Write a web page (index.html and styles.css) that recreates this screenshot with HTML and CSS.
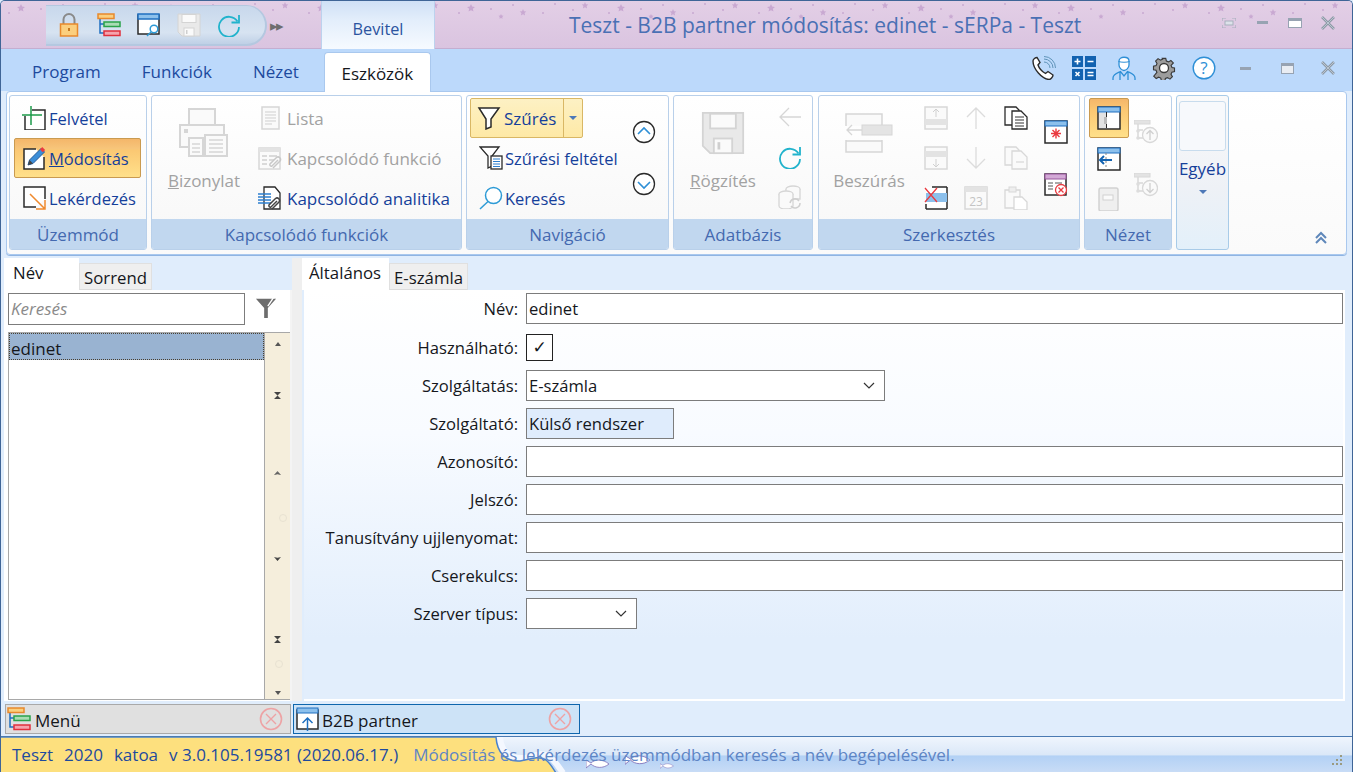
FILE: index.html
```html
<!DOCTYPE html>
<html lang="hu">
<head>
<meta charset="utf-8">
<title>Teszt - B2B partner módosítás: edinet - sERPa - Teszt</title>
<link rel="stylesheet" href="styles.css">
</head>
<body>
<svg class="sprite" width="0" height="0" aria-hidden="true">
  <defs>
    <pattern id="stars" width="150" height="48" patternUnits="userSpaceOnUse">
      <g fill="#c9a9d2">
        <path d="M20 3l1.2 2.6 2.8.3-2.1 1.9.6 2.8-2.5-1.4-2.5 1.4.6-2.8-2.1-1.9 2.8-.3z"/>
        <circle cx="40" cy="8" r="1"/><circle cx="8" cy="12" r="1"/><circle cx="62" cy="4" r="1"/>
        <path d="M72 8l1 2.2 2.4.3-1.8 1.6.5 2.4-2.1-1.2-2.1 1.2.5-2.4-1.8-1.6 2.4-.3z"/>
        <circle cx="92" cy="12" r="1"/><circle cx="104" cy="3" r="1"/><circle cx="122" cy="9" r="1"/>
        <path d="M134 1l1 2.2 2.4.3-1.8 1.6.5 2.4-2.1-1.2-2.1 1.2.5-2.4-1.8-1.6 2.4-.3z"/>
        <path d="M50 13l.8 1.6 1.8.2-1.3 1.2.3 1.8-1.6-.9-1.6.9.3-1.8-1.3-1.2 1.8-.2z"/>
      </g>
    </pattern>
    <symbol id="i-lock" viewBox="0 0 24 24"><path d="M6.500 12V6.500a5.500 5.500 0 0 1 11 0V12" fill="none" stroke="#8a8a8a" stroke-width="2"/><rect x="3.500" y="11" width="17" height="12" fill="#fbcf7e" stroke="#e8892c" stroke-width="1.500"/><rect x="11" y="15" width="2" height="3" fill="#c77a20"/></symbol>
    <symbol id="i-tree" viewBox="0 0 24 24"><path d="M3 4v16h4M3 11h4" fill="none" stroke="#1f6fc0" stroke-width="1.500"/><rect x="1" y="1" width="16" height="4.500" fill="#fbcf7e" stroke="#e8892c" stroke-width="1.500"/><rect x="7" y="9" width="16" height="4.500" fill="#a9dcb4" stroke="#2aa34a" stroke-width="1.500"/><rect x="7" y="18" width="16" height="4.500" fill="#f5a3ad" stroke="#e0303c" stroke-width="1.500"/></symbol>
    <symbol id="i-winsearch" viewBox="0 0 24 24"><rect x="1" y="2" width="21" height="19" fill="#fff" stroke="#2a2a2a" stroke-width="1.500"/><rect x="1" y="1" width="21" height="5" fill="#8cc0ec" stroke="#1f6fc0" stroke-width="1.500"/><circle cx="17" cy="16" r="3.800" fill="#fff" stroke="#2e9bd6" stroke-width="1.500"/><path d="M14 19l-4 4" stroke="#2e9bd6" stroke-width="1.500"/></symbol>
    <symbol id="i-save" viewBox="0 0 24 24"><path d="M1 1h22v22H5l-4-4z" fill="#e9e9e9" stroke="#d4d4d4"/><rect x="5" y="1.500" width="14" height="8" fill="#fafafa" stroke="#d4d4d4"/><rect x="7" y="15" width="10" height="8" fill="#fafafa" stroke="#d4d4d4"/><rect x="9" y="17" width="1.500" height="4" fill="#cfcfcf"/></symbol>
    <symbol id="i-refresh" viewBox="0 0 24 24"><path d="M20.500 8.500A10 10 0 1 0 22 14" fill="none" stroke="#21b3cc" stroke-width="1.800"/><path d="M22 2v7.500h-7.500" fill="none" stroke="#21b3cc" stroke-width="1.800"/></symbol>
    <symbol id="i-add" viewBox="0 0 24 24"><path d="M10 4h13v20H3V10" fill="#fff" stroke="#2a2a2a" stroke-width="1.500"/><path d="M0 9h20M9 0v19" stroke="#1d9a4a" stroke-width="1.500"/></symbol>
    <symbol id="i-edit" viewBox="0 0 24 24"><path d="M14 3H2v20h20V11" fill="#fff" stroke="#2a2a2a" stroke-width="1.500"/><path d="M6 19l1.500-5L19 2.500l3.500 3.500L11 17.500z" fill="#3c8ed8" stroke="#245a9a"/><path d="M18 3.500l2.200-2.500 3 3-2.500 2.200z" fill="#ea3a40"/><path d="M6 19l1.500-5 3.500 3.500z" fill="#444"/></symbol>
    <symbol id="i-query" viewBox="0 0 24 24"><path d="M23 13V1H2v20h12" fill="#fff" stroke="#2a2a2a" stroke-width="1.500"/><path d="M8 8l15 15M23 14v9h-9" fill="none" stroke="#ef8a2e" stroke-width="1.500"/></symbol>
    <symbol id="i-printer" viewBox="0 0 50 50"><g fill="#fafafa" stroke="#d6d6d6" stroke-width="2"><rect x="10" y="1" width="26" height="18"/><rect x="1" y="17" width="44" height="22"/><rect x="10" y="30" width="14" height="18"/><rect x="26" y="27" width="22" height="21"/></g><path d="M5 21h4v4H5z" fill="#d6d6d6"/><path d="M30 32h14M30 36h14M30 40h14M30 44h14M13 36h8M13 40h8M13 44h8" stroke="#d6d6d6" stroke-width="1.500"/></symbol>
    <symbol id="i-doc" viewBox="0 0 24 24"><rect x="4" y="1" width="17" height="22" fill="#fafafa" stroke="#d6d6d6" stroke-width="1.500"/><path d="M7 6h11M7 9h11M7 12h11M7 15h11M7 18h7" stroke="#cfcfcf"/></symbol>
    <symbol id="i-linkd" viewBox="0 0 24 24"><rect x="1" y="2" width="21" height="21" fill="#fafafa" stroke="#d8d8d8" stroke-width="1.500"/><rect x="1" y="2" width="21" height="4" fill="#e3e3e3"/><path d="M4 10h5M4 14h5M4 18h5M11 10h8M11 14h5" stroke="#cfcfcf" stroke-width="1.500"/><path d="M15 22l7-7a2.500 2.500 0 0 0-3.500-3.500L12 18a1.500 1.500 0 0 0 2 2l6-6" fill="none" stroke="#c8c8c8" stroke-width="1.500"/></symbol>
    <symbol id="i-linka" viewBox="0 0 24 24"><path d="M6 1h11l5 6v16H6z" fill="#fff" stroke="#2a2a2a" stroke-width="1.300"/><path d="M0 8h13M0 11h13M0 14h13M0 17h13" stroke="#2c7fd0" stroke-width="1.500"/><path d="M14 23l7-7a2.500 2.500 0 0 0-3.500-3.500L11 19a1.500 1.500 0 0 0 2 2l6-6" fill="none" stroke="#444" stroke-width="1.500"/></symbol>
    <symbol id="i-filter" viewBox="0 0 24 24"><path d="M2 2h20l-8 11v8l-5 2V13z" fill="#fff" stroke="#2a2a2a" stroke-width="1.500"/></symbol>
    <symbol id="i-filterdoc" viewBox="0 0 24 24"><path d="M1 1h19l-7 9v10l-4 2V10z" fill="#fff" stroke="#2a2a2a" stroke-width="1.300"/><rect x="12" y="10" width="11" height="13" fill="#fff" stroke="#2a2a2a" stroke-width="1.300"/><path d="M14 13h7M14 15.500h7M14 18h7M14 20.500h7" stroke="#2c7fd0"/></symbol>
    <symbol id="i-search" viewBox="0 0 24 24"><circle cx="14.500" cy="9.500" r="8" fill="#fff" stroke="#2e9bd6" stroke-width="1.500"/><path d="M9 15.500L1 23" stroke="#2e9bd6" stroke-width="1.500"/></symbol>
    <symbol id="i-up" viewBox="0 0 24 24"><circle cx="12" cy="12" r="10.500" fill="#fff" stroke="#2a2a2a" stroke-width="1.300"/><path d="M6 14l6-6 6 6" fill="none" stroke="#2e8fd6" stroke-width="1.600"/></symbol>
    <symbol id="i-down" viewBox="0 0 24 24"><circle cx="12" cy="12" r="10.500" fill="#fff" stroke="#2a2a2a" stroke-width="1.300"/><path d="M6 10l6 6 6-6" fill="none" stroke="#2e8fd6" stroke-width="1.600"/></symbol>
    <symbol id="i-back" viewBox="0 0 24 24"><path d="M23 12H2M11 3l-9 9 9 9" fill="none" stroke="#d6d6d6" stroke-width="1.300"/></symbol>
    <symbol id="i-db" viewBox="0 0 24 24"><g fill="#fafafa" stroke="#d6d6d6" stroke-width="1.300"><ellipse cx="15" cy="4" rx="7" ry="3"/><path d="M8 4v10h14V4"/><ellipse cx="8" cy="9" rx="7" ry="3"/><path d="M1 9v12a7 3 0 0 0 14 0V9"/></g><path d="M12 18a5 5 0 0 1 9-2M22 18a5 5 0 0 1-9 3" fill="none" stroke="#cfcfcf" stroke-width="1.500"/></symbol>
    <symbol id="i-insert" viewBox="0 0 48 40"><path d="M1 13V1h36v12M1 27v12h36V27M1 28h36" fill="#fafafa" stroke="#d6d6d6" stroke-width="1.500"/><rect x="17" y="12" width="30" height="10" fill="#e4e4e4" stroke="#d6d6d6"/><path d="M17 17H2M7 12l-5 5 5 5" fill="none" stroke="#d6d6d6" stroke-width="1.300"/></symbol>
    <symbol id="i-rowup" viewBox="0 0 24 24"><rect x="1" y="1" width="22" height="22" fill="#fafafa" stroke="#d8d8d8" stroke-width="1.500"/><rect x="1" y="13" width="22" height="6" fill="#e3e3e3"/><path d="M12 11V4M9 6l3-3 3 3" fill="none" stroke="#d0d0d0"/></symbol>
    <symbol id="i-rowdown" viewBox="0 0 24 24"><rect x="1" y="1" width="22" height="22" fill="#fafafa" stroke="#d8d8d8" stroke-width="1.500"/><rect x="1" y="5" width="22" height="6" fill="#e3e3e3"/><path d="M12 13v7M9 18l3 3 3-3" fill="none" stroke="#d0d0d0"/></symbol>
    <symbol id="i-rowdel" viewBox="0 0 24 24"><path d="M2 1h21v22H2z" fill="#fff"/><path d="M8 1h15M2 23h21M23 1v22M2 18v5" fill="none" stroke="#2a2a2a" stroke-width="1.500"/><rect x="2" y="7" width="21" height="9" fill="#8cc0ec"/><path d="M1 2l12 14M13 2L1 16" stroke="#ea3a40" stroke-width="1.300"/></symbol>
    <symbol id="i-aup" viewBox="0 0 24 24"><path d="M12 23V2M3 11l9-9 9 9" fill="none" stroke="#dcdcdc" stroke-width="1.300"/></symbol>
    <symbol id="i-adown" viewBox="0 0 24 24"><path d="M12 1v21M3 13l9 9 9-9" fill="none" stroke="#dcdcdc" stroke-width="1.300"/></symbol>
    <symbol id="i-cal" viewBox="0 0 24 24"><rect x="1" y="1" width="22" height="22" fill="#fafafa" stroke="#d8d8d8" stroke-width="1.500"/><rect x="1" y="1" width="22" height="5" fill="#e3e3e3"/><text x="12" y="20" font-family="Open Sans" font-size="12" text-anchor="middle" fill="#c4c4c4">23</text></symbol>
    <symbol id="i-copy" viewBox="0 0 24 24"><path d="M1 1h11l3 3v15H1z" fill="#fff" stroke="#2a2a2a" stroke-width="1.300"/><path d="M8 5h9l6 6v12H8z" fill="#fff" stroke="#2a2a2a" stroke-width="1.300"/><path d="M11 11h9M11 14h9M11 17h9M11 20h9" stroke="#333"/></symbol>
    <symbol id="i-cut" viewBox="0 0 24 24"><path d="M1 1h11l3 3v15H1z" fill="#fafafa" stroke="#d8d8d8" stroke-width="1.300"/><path d="M8 5h9l6 6v12H8z" fill="#fafafa" stroke="#d8d8d8" stroke-width="1.300"/><path d="M12 16h8" stroke="#d0d0d0"/></symbol>
    <symbol id="i-paste" viewBox="0 0 24 24"><path d="M1 4h15v18H1z" fill="#fafafa" stroke="#d8d8d8" stroke-width="1.300"/><rect x="5" y="1" width="7" height="5" fill="#eee" stroke="#d8d8d8"/><path d="M10 11h8l5 5v8H10z" fill="#fff" stroke="#d8d8d8" stroke-width="1.300"/></symbol>
    <symbol id="i-star" viewBox="0 0 24 24"><rect x="1" y="1" width="22" height="22" fill="#fff" stroke="#2a2a2a" stroke-width="1.500"/><rect x="1" y="1" width="22" height="5" fill="#8cc0ec" stroke="#1f6fc0" stroke-width="1"/><path d="M12 8.500v10M7 13.500h10M8.500 10l7 7M15.500 10l-7 7" stroke="#ea3a40" stroke-width="1.400"/></symbol>
    <symbol id="i-windel" viewBox="0 0 24 24"><rect x="1" y="1" width="21" height="21" fill="#fff" stroke="#2a2a2a" stroke-width="1.500"/><rect x="1" y="1" width="21" height="5" fill="#d3a9d6" stroke="#99569e" stroke-width="1"/><path d="M4 10h5M4 13h5M4 16h5M11 10h7" stroke="#555"/><circle cx="17" cy="17" r="5.500" fill="#fff" stroke="#ea3a40" stroke-width="1.300"/><path d="M14.500 14.500l5 5M19.500 14.500l-5 5" stroke="#ea3a40" stroke-width="1.300"/></symbol>
    <symbol id="i-pane" viewBox="0 0 24 24"><rect x="1" y="1" width="22" height="22" fill="#fff" stroke="#2a2a2a" stroke-width="1.500"/><rect x="1" y="1" width="22" height="5" fill="#8cc0ec" stroke="#1f6fc0" stroke-width="1"/><rect x="2" y="7" width="7" height="15" fill="#e2e2e2"/><path d="M9.500 6v16" stroke="#2a2a2a"/><rect x="7" y="11" width="3" height="7" fill="#bbb"/></symbol>
    <symbol id="i-paneback" viewBox="0 0 24 24"><rect x="1" y="1" width="22" height="22" fill="#fff" stroke="#2a2a2a" stroke-width="1.500"/><rect x="1" y="1" width="22" height="5" fill="#8cc0ec" stroke="#1f6fc0" stroke-width="1"/><path d="M9 6v17" stroke="#888" stroke-dasharray="2 2"/><path d="M15 13H3M7 9l-4 4 4 4" fill="none" stroke="#1262b0" stroke-width="2"/></symbol>
    <symbol id="i-box" viewBox="0 0 24 24"><rect x="2" y="1" width="19" height="23" rx="2" fill="#efefef" stroke="#d2d2d2" stroke-width="1.500"/><rect x="6" y="8" width="10" height="5" fill="#fafafa" stroke="#d2d2d2"/></symbol>
    <symbol id="i-treeup" viewBox="0 0 24 24"><rect x="0" y="0" width="16" height="4" fill="#e3e3e3" stroke="#d8d8d8"/><path d="M4 4v14h5M4 10h5" fill="none" stroke="#d8d8d8" stroke-width="1.500"/><circle cx="4" cy="11" r="1.800" fill="#ddd"/><circle cx="4" cy="18" r="1.800" fill="#ddd"/><circle cx="16" cy="15" r="7.500" fill="#fafafa" stroke="#d8d8d8" stroke-width="1.300"/><path d="M16 20v-9M12.500 14l3.500-3.500 3.500 3.500" fill="none" stroke="#d0d0d0" stroke-width="1.300"/></symbol>
    <symbol id="i-treedown" viewBox="0 0 24 24"><rect x="0" y="0" width="16" height="4" fill="#e3e3e3" stroke="#d8d8d8"/><path d="M4 4v14h5M4 10h5" fill="none" stroke="#d8d8d8" stroke-width="1.500"/><circle cx="4" cy="11" r="1.800" fill="#ddd"/><circle cx="4" cy="18" r="1.800" fill="#ddd"/><circle cx="16" cy="15" r="7.500" fill="#fafafa" stroke="#d8d8d8" stroke-width="1.300"/><path d="M16 10v9M12.500 16l3.500 3.500 3.500-3.500" fill="none" stroke="#d0d0d0" stroke-width="1.300"/></symbol>
    <symbol id="i-phone" viewBox="0 0 24 24"><path d="M1 5c0-2 2.500-3.500 4-3.500l3 5-2 2.500c1 3 4 6.500 7.500 8.500l2.500-2 5 3.500c0 2-2.500 4.500-4 4.500C10 23 1 13 1 5z" fill="#fff" stroke="#2a2a2a" stroke-width="1.400"/><path d="M12 3a9 9 0 0 1 9 9M12 .5a11.500 11.500 0 0 1 11.500 11.500M12 6a6 6 0 0 1 6 6" fill="none" stroke="#5f93b8" stroke-width="1"/></symbol>
    <symbol id="i-calc" viewBox="0 0 24 24"><g fill="#1262b0"><rect width="11" height="11"/><rect x="13" width="11" height="11"/><rect y="13" width="11" height="11"/><rect x="13" y="13" width="11" height="11"/></g><path d="M2.500 5.500h6M5.500 2.500v6M15.500 5.500h6M3.500 16l4 4M7.500 16l-4 4M15.500 16.500h6M15.500 19.500h6" stroke="#fff" stroke-width="1.600"/></symbol>
    <symbol id="i-user" viewBox="0 0 24 24"><path d="M7 5c0-5 10-5 10 0v4c0 3-3 5.500-5 5.500S7 12 7 9z" fill="#fff" stroke="#2e8fd6" stroke-width="1.300"/><path d="M6.500 5.500c3 1 8 1 11 0" fill="none" stroke="#2e8fd6"/><path d="M1 24v-2c0-4 4-5 7.500-6.500L12 20l3.500-4.500C19 17 23 18 23 22v2M8 16v8M16 16v8" fill="none" stroke="#2e8fd6" stroke-width="1.300"/></symbol>
    <symbol id="i-gear" viewBox="0 0 24 24"><path d="M10 1h4l.7 3 2.500 1 2.700-1.600 2.800 2.800L20.100 9l1 2.500 2.900.5v4l-3 .7-1 2.500 1.600 2.700-2.800 2.800-2.800-1.700-2.400 1-.6 2.500h-4l-.7-3-2.500-1-2.700 1.600-2.800-2.800L3.900 17l-1-2.500-2.900-.5v-4l3-.7 1-2.500-1.600-2.700 2.800-2.800 2.800 1.700 2.400-1z" transform="translate(1.500 1.500) scale(.875)" fill="#9c9c9c" stroke="#3a3a3a" stroke-width="1.300"/><circle cx="12" cy="12" r="4.500" fill="#fff" stroke="#3a3a3a" stroke-width="1.300"/></symbol>
    <symbol id="i-help" viewBox="0 0 24 24"><circle cx="12" cy="12" r="10.800" fill="#fff" stroke="#2e8fd6" stroke-width="1.400"/><text x="12" y="18" font-family="Open Sans" font-size="17" text-anchor="middle" fill="#2e8fd6">?</text></symbol>
    <symbol id="i-x" viewBox="0 0 14 14"><path d="M1 1l12 12M13 1L1 13" stroke="#8e9aa6" stroke-width="2.600"/><path d="M1 1l12 12M13 1L1 13" stroke="#b9c4cf" stroke-width="1"/></symbol>
    <symbol id="i-cls" viewBox="0 0 24 24"><circle cx="12" cy="12" r="10.500" fill="none" stroke="#eda3a5" stroke-width="1.600"/><path d="M7 7l10 10M17 7L7 17" stroke="#eda3a5" stroke-width="1.400"/></symbol>
    <symbol id="i-b2b" viewBox="0 0 24 24"><rect x="1" y="3" width="21" height="19" fill="#fff" stroke="#2a2a2a" stroke-width="1.500"/><rect x="1" y="1" width="21" height="5" fill="#8cc0ec" stroke="#1f6fc0" stroke-width="1"/><path d="M11.500 25V11M6.500 16l5-5 5 5" fill="none" stroke="#1f6fc0" stroke-width="1.500"/></symbol>
    <symbol id="i-funnel" viewBox="0 0 24 24"><path d="M1 2h22l-9 10v11h-4V12z" fill="#6d6d6d"/><path d="M20 1l-6 9" stroke="#fff" stroke-width="1.500"/></symbol>
    <symbol id="i-fish" viewBox="0 0 24 10"><path d="M0 1l5 3c4-4 12-4 18 1-6 5-14 4-18 0l-5 4z" fill="#fff" stroke="#7d6fb8" stroke-width=".8"/></symbol>
  </defs>
</svg>

<div class="app">
  <header class="titlebar">
    <svg class="stars" aria-hidden="true"><rect width="100%" height="100%" fill="url(#stars)"/></svg>
    <div class="qat">
      <svg class="ic ic-24"><use href="#i-lock"/></svg>
      <svg class="ic ic-24"><use href="#i-tree"/></svg>
      <svg class="ic ic-24"><use href="#i-winsearch"/></svg>
      <svg class="ic ic-24"><use href="#i-save"/></svg>
      <svg class="ic ic-24"><use href="#i-refresh"/></svg>
    </div>
    <span class="qat-more">▸▸</span>
    <div class="ctx-tab">Bevitel</div>
    <h1 class="title">Teszt - B2B partner módosítás: edinet - sERPa - Teszt</h1>
    <div class="winbtns">
      <svg class="wb-focus" viewBox="0 0 14 10"><path d="M0 3V0h4M10 0h4v3M14 7v3h-4M4 10H0V7" fill="none" stroke="#a7b0bd" stroke-width="1.200"/><rect x="3" y="3" width="8" height="4" fill="#dde2ea" stroke="#a7b0bd"/></svg>
      <span class="wb-min"></span>
      <span class="wb-max"></span>
      <svg class="wb-x"><use href="#i-x"/></svg>
    </div>
  </header>

  <nav class="tabbar">
    <span class="tab">Program</span>
    <span class="tab">Funkciók</span>
    <span class="tab">Nézet</span>
    <span class="tab tab-active">Eszközök</span>
    <div class="tools">
      <svg class="ic ic-24"><use href="#i-phone"/></svg>
      <svg class="ic ic-24"><use href="#i-calc"/></svg>
      <svg class="ic ic-24"><use href="#i-user"/></svg>
      <svg class="ic ic-24"><use href="#i-gear"/></svg>
      <svg class="ic ic-24"><use href="#i-help"/></svg>
      <div class="tools-win">
        <span class="wb-min"></span>
        <span class="wb-restore"></span>
        <svg class="wb-x"><use href="#i-x"/></svg>
      </div>
    </div>
  </nav>

  <section class="ribbon">
    <div class="grp g-mode">
      <div class="grp-body col">
        <div class="rb"><svg class="ic ic-24"><use href="#i-add"/></svg><span>Felvétel</span></div>
        <div class="rb rb-on"><svg class="ic ic-24"><use href="#i-edit"/></svg><span><u>M</u>ódosítás</span></div>
        <div class="rb"><svg class="ic ic-24"><use href="#i-query"/></svg><span>Lekérdezés</span></div>
      </div>
      <div class="grp-label">Üzemmód</div>
    </div>

    <div class="grp g-link">
      <div class="grp-body row">
        <div class="big big-print off"><svg class="ic-print"><use href="#i-printer"/></svg><span><u>B</u>izonylat</span></div>
        <div class="col">
          <div class="rb rb-tight off"><svg class="ic ic-24"><use href="#i-doc"/></svg><span>Lista</span></div>
          <div class="rb rb-tight off"><svg class="ic ic-24"><use href="#i-linkd"/></svg><span>Kapcsolódó funkció</span></div>
          <div class="rb rb-tight"><svg class="ic ic-24"><use href="#i-linka"/></svg><span>Kapcsolódó analitika</span></div>
        </div>
      </div>
      <div class="grp-label">Kapcsolódó funkciók</div>
    </div>

    <div class="grp g-nav">
      <div class="grp-body row">
        <div class="col">
          <div class="split">
            <div class="split-main"><svg class="ic ic-24"><use href="#i-filter"/></svg><span>Szűrés</span></div>
            <div class="split-arrow"><i class="tri"></i></div>
          </div>
          <div class="rb rb-tight"><svg class="ic ic-24"><use href="#i-filterdoc"/></svg><span>Szűrési feltétel</span></div>
          <div class="rb rb-tight"><svg class="ic ic-24"><use href="#i-search"/></svg><span>Keresés</span></div>
        </div>
        <div class="updown">
          <svg class="ic ic-24"><use href="#i-up"/></svg>
          <svg class="ic ic-24"><use href="#i-down"/></svg>
        </div>
      </div>
      <div class="grp-label">Navigáció</div>
    </div>

    <div class="grp g-db">
      <div class="grp-body row">
        <div class="big big-save off"><svg class="ic-floppy"><use href="#i-save"/></svg><span><u>R</u>ögzítés</span></div>
        <div class="icons-col">
          <svg class="ic ic-24"><use href="#i-back"/></svg>
          <svg class="ic ic-24"><use href="#i-refresh"/></svg>
          <svg class="ic ic-24"><use href="#i-db"/></svg>
        </div>
      </div>
      <div class="grp-label">Adatbázis</div>
    </div>

    <div class="grp g-edit">
      <div class="grp-body row">
        <div class="big big-insert off"><svg class="ic-insert"><use href="#i-insert"/></svg><span>Beszúrás</span></div>
        <div class="icons-grid">
          <svg class="ic ic-24"><use href="#i-rowup"/></svg>
          <svg class="ic ic-24"><use href="#i-aup"/></svg>
          <svg class="ic ic-24"><use href="#i-copy"/></svg>
          <svg class="ic ic-24"><use href="#i-rowdown"/></svg>
          <svg class="ic ic-24"><use href="#i-adown"/></svg>
          <svg class="ic ic-24"><use href="#i-cut"/></svg>
          <svg class="ic ic-24"><use href="#i-rowdel"/></svg>
          <svg class="ic ic-24"><use href="#i-cal"/></svg>
          <svg class="ic ic-24"><use href="#i-paste"/></svg>
        </div>
        <div class="icons-pair">
          <svg class="ic ic-24"><use href="#i-star"/></svg>
          <svg class="ic ic-24"><use href="#i-windel"/></svg>
        </div>
      </div>
      <div class="grp-label">Szerkesztés</div>
    </div>

    <div class="grp g-view">
      <div class="grp-body row">
        <div class="view-col">
          <div class="view-on"><svg class="ic ic-24"><use href="#i-pane"/></svg></div>
          <svg class="ic ic-24"><use href="#i-paneback"/></svg>
          <svg class="ic ic-24"><use href="#i-box"/></svg>
        </div>
        <div class="icons-pair view-pair">
          <svg class="ic ic-24"><use href="#i-treeup"/></svg>
          <svg class="ic ic-24"><use href="#i-treedown"/></svg>
        </div>
      </div>
      <div class="grp-label">Nézet</div>
    </div>

    <div class="g-other">
      <div class="other-box"></div>
      <div class="other-text">Egyéb</div>
      <i class="tri tri-other"></i>
    </div>

    <div class="collapse">
      <svg width="14" height="14" viewBox="0 0 14 14"><path d="M2 7l5-5 5 5M2 12l5-5 5 5" fill="none" stroke="#5e87ba" stroke-width="2"/></svg>
    </div>
  </section>

  <main class="content">
    <aside class="left">
      <div class="ptabs">
        <span class="ptab ptab-on ptab-nev">Név</span>
        <span class="ptab">Sorrend</span>
      </div>
      <div class="left-body">
        <div class="searchrow">
          <div class="searchbox">Keresés</div>
          <svg class="funnel"><use href="#i-funnel"/></svg>
        </div>
        <div class="listwrap">
          <div class="list"><div class="item">edinet</div></div>
          <div class="scroll">
            <i class="sb sb-up"></i>
            <div class="sb sb-hour sb-top"></div>
            <div class="sb sb-dtop"></div>
            <div class="sb sb-dbot"></div>
            <div class="sb sb-hour sb-bot"></div>
            <i class="sb sb-down"></i>
            <span class="ghost ghost-a"></span>
            <span class="ghost ghost-b"></span>
          </div>
        </div>
      </div>
    </aside>
    <div class="splitter"></div>
    <section class="right">
      <div class="ptabs">
        <span class="ptab ptab-on ptab-alt">Általános</span>
        <span class="ptab">E-számla</span>
      </div>
      <form class="form">
        <label class="lbl">Név:</label><div class="field">edinet</div>
        <label class="lbl">Használható:</label><div class="check">✓</div>
        <label class="lbl">Szolgáltatás:</label><div class="field select sel-wide">E-számla<svg width="12" height="7" viewBox="0 0 12 7"><path d="M1 1l5 5 5-5" fill="none" stroke="#333" stroke-width="1.200"/></svg></div>
        <label class="lbl">Szolgáltató:</label><div class="field ro">Külső rendszer</div>
        <label class="lbl">Azonosító:</label><div class="field"></div>
        <label class="lbl">Jelszó:</label><div class="field"></div>
        <label class="lbl">Tanusítvány ujjlenyomat:</label><div class="field"></div>
        <label class="lbl">Cserekulcs:</label><div class="field"></div>
        <label class="lbl">Szerver típus:</label><div class="field select sel-small"><svg width="12" height="7" viewBox="0 0 12 7"><path d="M1 1l5 5 5-5" fill="none" stroke="#333" stroke-width="1.200"/></svg></div>
      </form>
    </section>
  </main>

  <div class="docbar">
    <div class="doc doc-menu"><svg class="ic ic-24"><use href="#i-tree"/></svg><span>Menü</span><svg class="doc-x"><use href="#i-cls"/></svg></div>
    <div class="doc doc-b2b"><svg class="ic ic-24"><use href="#i-b2b"/></svg><span>B2B partner</span><svg class="doc-x"><use href="#i-cls"/></svg></div>
  </div>

  <footer class="status">
    <svg class="status-art" viewBox="0 0 1353 36" aria-hidden="true">
      <path d="M500 0C501 14 509 22 524 21C534 20 540 14 550 20C555 24 559 30 563 36" fill="none" stroke="#f4f8ff" stroke-width="6"/>
      <path d="M0 0H496C497 15 505 25 520 24C530 23 536 18 546 23C550 26 553 31 556 36H0z" fill="#fde07e" stroke="#4a82cc" stroke-width="1.500"/>
      <use href="#i-fish" x="586" y="22" width="24" height="10"/>
      <use href="#i-fish" x="625" y="17" width="26" height="12"/>
      <use href="#i-fish" x="660" y="26" width="14" height="6"/>
    </svg>
    <span class="st-item">Teszt</span><span class="st-item">2020</span><span class="st-item">katoa</span><span class="st-item">v 3.0.105.19581 (2020.06.17.)</span>
    <span class="st-msg">Módosítás és lekérdezés üzemmódban keresés a név begépelésével.</span>
    <svg class="grip" width="14" height="14" viewBox="0 0 14 14"><g fill="#9a9a80"><rect x="10" y="1" width="2" height="2"/><rect x="6" y="5" width="2" height="2"/><rect x="10" y="5" width="2" height="2"/><rect x="2" y="9" width="2" height="2"/><rect x="6" y="9" width="2" height="2"/><rect x="10" y="9" width="2" height="2"/></g></svg>
  </footer>
</div>
</body>
</html>
```

FILE: styles.css
```css
* { box-sizing: border-box; }
html, body { margin: 0; height: 100%; }
body { font-family: "Open Sans", "Liberation Sans", sans-serif; font-size: 17px; overflow: hidden; background: #e0edfc; }
.sprite { position: absolute; }
.ic { display: block; flex: none; }
.ic-24 { width: 24px; height: 24px; }

.app { width: 1353px; height: 772px; display: flex; flex-direction: column; border: 1px solid #3f6597; border-bottom: 0; border-radius: 5px 5px 0 0; overflow: hidden; }

/* title */
.titlebar { position: relative; height: 48px; flex: none; display: flex; align-items: center; background: linear-gradient(#e3cfe6, #dac4e0); border-bottom: 1px solid #c4aed0; }
.stars { position: absolute; left: 0; top: 0; width: 100%; height: 22px; }
.qat { position: relative; margin-left: 45px; width: 221px; height: 41px; padding-left: 11px; display: flex; align-items: center; gap: 16px; background: linear-gradient(#c8d8ec, #d7e3f1 70%, #bfd0e6); border: solid #b4c8e0; border-width: 1px 2px 2px 0; border-radius: 0 21px 21px 0; margin-top: 1px; }
.qat-more { position: relative; width: 55px; padding-left: 3px; color: #6e6e6e; font-size: 15px; letter-spacing: -2px; }
.ctx-tab { position: relative; margin-left: -1px; width: 114px; height: 48px; padding-top: 17px; text-align: center; font-size: 16.3px; color: #2b549f; background: linear-gradient(#cfe0f6, #e3eefb 40%, #f6faff); border: solid #bcd2ee; border-width: 0 1px; }
.title { position: relative; margin: 0 0 0 134px; width: 511px; font-size: 21px; font-weight: 400; white-space: nowrap; color: #4a70b4; padding-top: 1px; }
.winbtns { position: relative; margin-left: auto; display: flex; align-items: center; padding-right: 17px; padding-bottom: 4px; }
.wb-focus { width: 14px; height: 10px; margin-right: 21px; display: block; }
.wb-min { width: 11px; height: 3px; margin-right: 20px; background: #97a3b2; }
.wb-max { width: 14px; height: 10px; margin-right: 19px; background: #fff; border: 1px solid #97a3b2; border-top-width: 3px; }
.wb-restore { width: 13px; height: 11px; margin-right: 27px; background: #e9edf3; border: 1px solid #97a3b2; border-top-width: 3px; }
.wb-x { width: 14px; height: 14px; display: block; }

/* tab row */
.tabbar { height: 42px; flex: none; display: flex; align-items: flex-end; background: #bcd9fb; position: relative; padding-left: 31px; }
.tab { color: #1d4a9e; height: 38px; line-height: 38px; margin-right: 41px; white-space: nowrap; }
.tab-active { width: 107px; height: 40px; margin: 0 0 -1px -16px; line-height: 41px; text-align: center; color: #15171c; background: #fff; border: 1px solid #a9c8ee; border-bottom: 0; border-radius: 4px 4px 0 0; position: relative; z-index: 2; }
.tools { margin-left: auto; height: 40px; align-self: flex-start; margin-top: 7px; display: flex; align-items: flex-start; gap: 16px; padding-right: 17px; }
.tools-win { display: flex; align-items: center; height: 24px; margin-left: 8px; }
.tools-win .wb-min { margin-right: 30px; }

/* ribbon */
.ribbon { height: 164px; flex: none; margin: 0 5px; padding: 3px 2px; display: flex; gap: 4px; background: linear-gradient(#fff, #fafafa); border: 1px solid #a9c8ee; border-radius: 4px; box-shadow: 0 1px 0 #8fb4e2; position: relative; }
.grp { height: 155px; display: flex; flex-direction: column; flex: none; border: 1px solid #b9d0ea; border-radius: 3px; overflow: hidden; background: linear-gradient(#fff, #f7f7f7); }
.grp-body { flex: 1; min-height: 0; }
.grp-label { height: 30px; flex: none; text-align: center; line-height: 31px; color: #4469b0; background: #c1d7ef; }
.col { display: flex; flex-direction: column; }
.row { display: flex; }
.g-mode { width: 138px; }
.g-mode .grp-body { padding: 2px 5px 0 4px; }
.g-mode .rb { font-size: 16.5px; gap: 3px; }
.g-link { width: 311px; }
.g-nav { width: 203px; }
.g-db { width: 140px; }
.g-edit { width: 262px; margin-left: 1px; }
.g-view { width: 88px; }

.rb { height: 40px; display: flex; align-items: center; gap: 4px; padding-left: 8px; color: #153f9a; white-space: nowrap; }
.rb-tight { padding-left: 0; }
.rb-on { background: linear-gradient(#f4b66a 0, #f7c57a 25%, #fbc873 30%, #ffe08a); border: 1px solid #c99a50; border-radius: 2px; padding-left: 7px; }
.off, .off span { color: #a2a2a2; }
.big { position: relative; display: flex; flex-direction: column; align-items: center; white-space: nowrap; }
.big span { position: absolute; top: 73px; white-space: nowrap; }
.big-print { width: 100px; margin-left: 2px; padding-top: 12px; }
.ic-print { width: 50px; height: 50px; display: block; }
.g-link .col { padding-top: 2px; margin-left: 4px; }
.g-link .rb { gap: 5px; }
.g-nav .col { padding: 2px 0 0 3px; width: 160px; }
.g-nav .rb { gap: 2px; padding-left: 9px; font-size: 16.5px; }
.split { width: 113px; height: 40px; display: flex; background: linear-gradient(#fdf1c4, #fee9a6); border: 1px solid #d9b765; border-radius: 2px; color: #153f9a; }
.split-main { flex: 1; display: flex; align-items: center; gap: 3px; padding-left: 6px; border-right: 1px solid #d9b765; }
.split-arrow { width: 18px; display: flex; align-items: center; justify-content: center; }
.tri { display: block; width: 0; height: 0; border: 4px solid transparent; border-top: 4px solid #4d78b8; border-bottom: 0; }
.updown { display: flex; flex-direction: column; gap: 28px; padding: 24px 0 0 5px; }
.big-save { width: 98px; padding: 15px 0 0 0; }
.ic-floppy { width: 44px; height: 44px; display: block; }
.icons-col { display: flex; flex-direction: column; gap: 16px; padding-top: 9px; margin-left: 6px; }
.big-insert { width: 100px; padding-top: 17px; }
.ic-insert { width: 48px; height: 40px; display: block; }
.icons-grid { display: grid; grid-template-columns: repeat(3, 24px); grid-auto-rows: 24px; column-gap: 16px; row-gap: 16px; padding-top: 10px; margin-left: 5px; }
.icons-pair { display: flex; flex-direction: column; gap: 29px; padding-top: 24px; margin-left: 16px; }
.view-col { padding: 2px 0 0 3px; display: flex; flex-direction: column; align-items: center; gap: 16px; width: 44px; }
.view-on { width: 40px; height: 40px; display: flex; align-items: center; justify-content: center; background: linear-gradient(#f4b66a, #fbc873 30%, #ffe08a); border: 1px solid #c99a50; border-radius: 2px; margin-bottom: -7px; }
.view-pair { margin-left: 5px; gap: 29px; }
.g-other { width: 53px; height: 155px; flex: none; padding: 5px 1px 0; border: 1px solid #a8cbe8; border-radius: 3px; background: linear-gradient(#fafafa, #eef1f6 60%, #e3f0fa); text-align: center; }
.other-box { height: 50px; margin: 0 1px; background: #f7f9fc; border: 1px solid #c8dced; border-radius: 3px; }
.other-text { margin-top: 7px; color: #153f9a; line-height: 22px; white-space: nowrap; }
.tri-other { margin: 10px auto 0; }
.collapse { margin-left: auto; align-self: flex-end; padding: 0 16px 1px 0; }

/* content */
.content { flex: 1; min-height: 0; display: flex; padding-top: 3px; background: #e0edfc; }
.left { width: 288px; margin-left: 3px; flex: none; display: flex; flex-direction: column; }
.splitter { width: 10px; background: #efefef; flex: none; }
.right { flex: 1; display: flex; flex-direction: column; margin-right: 5px; min-width: 0; }
.ptabs { height: 32px; flex: none; display: flex; align-items: flex-end; color: #15171c; font-size: 16.8px; }
.ptab { height: 27px; line-height: 27px; padding: 0 4px; background: #efefef; border: 1px solid #e0e0e0; border-bottom: 1px solid #dcdcdc; white-space: nowrap; }
.ptab-on { height: 32px; background: #fff; border: 0; line-height: 30px; }
.ptab-nev { width: 75px; padding-left: 9px; }
.ptab-alt { width: 87px; padding-left: 7px; }
.left-body { flex: 1; min-height: 0; background: #fff; border-right: 2px solid #f4f4f4; padding: 3px 0 0 4px; display: flex; flex-direction: column; }
.searchrow { display: flex; height: 33px; flex: none; align-items: flex-start; }
.searchbox { width: 237px; height: 32px; border: 1px solid #7c7c7c; line-height: 30px; padding-left: 2px; font-style: italic; color: #8a8a8a; }
.funnel { width: 22px; height: 22px; margin: 4px 0 0 10px; display: block; }
.listwrap { flex: 1; min-height: 0; margin-top: 6px; display: flex; border: 1px solid #a8a8a8; border-right: 0; margin-bottom: 1px; }
.list { width: 256px; flex: none; background: #fff; border-right: 1px solid #a8a8a8; }
.item { height: 27px; line-height: 29px; background: #99b3d1; border: 1px dotted #4a4030; padding-left: 1px; color: #15171c; }
.scroll { position: relative; flex: 1; background: #f5eedc; display: flex; flex-direction: column; align-items: center; padding: 9px 0 0; }
.sb { display: block; width: 0; height: 0; border: 3.5px solid transparent; flex: none; }
.sb-up { border-bottom: 4px solid #555; border-top: 0; }
.sb-hour { width: 7px; height: 7px; border: 0; background: #444; clip-path: polygon(0 0, 100% 0, 50% 50%, 100% 100%, 0 100%, 50% 50%); }
.sb-top { margin-top: 46px; }
.sb-dtop { width: 7px; height: 8px; border: 0; margin-top: 72px; background: linear-gradient(#777, #333); clip-path: polygon(50% 0, 100% 50%, 50% 40%, 0 50%); }
.sb-dbot { width: 7px; height: 8px; border: 0; margin-top: 74px; background: linear-gradient(#777, #333); clip-path: polygon(0 50%, 50% 60%, 100% 50%, 50% 100%); }
.sb-bot { margin-top: 75px; }
.sb-down { border-top: 4px solid #555; border-bottom: 0; margin-top: 48px; }
.ghost { position: absolute; width: 8px; height: 8px; border: 1px solid #e8e2d2; border-radius: 50%; }
.ghost-a { left: 14px; top: 181px; }
.ghost-b { left: 10px; top: 327px; }

.form { flex: 1; min-height: 0; margin: 0 2px; background: linear-gradient(#fff, #f8fbff 35%, #e2eefc 85%); padding: 3px 0 0 0; display: grid; grid-template-columns: 214px 1fr; column-gap: 8px; grid-auto-rows: max-content; align-content: start; align-items: center; color: #15171c; border-bottom: 2px solid #fff; border-right: 2px solid #fff; font-size: 16.6px; }
.lbl { text-align: right; white-space: nowrap; margin-bottom: 7px; }
.field { height: 31px; background: #fff; border: 1px solid #7c7c7c; line-height: 29px; padding-left: 2px; margin-bottom: 7px; white-space: nowrap; }
.check { width: 27px; height: 27px; border: 1px solid #222; background: #fff; margin: 3px 0 9px; text-align: center; line-height: 24px; font-size: 17px; font-family: "DejaVu Sans", sans-serif; }
.select { display: flex; align-items: center; justify-content: space-between; padding-right: 9px; }
.sel-wide { width: 359px; }
.sel-small { width: 111px; justify-content: flex-end; }
.ro { width: 148px; background: #dfecfc; }

/* doc bar */
.docbar { height: 35px; flex: none; display: flex; gap: 2px; padding: 3px 0 0 4px; background: #e0edfc; }
.doc { height: 30px; display: flex; align-items: center; gap: 4px; padding-left: 1px; color: #15171c; position: relative; }
.doc span { padding-top: 3px; }
.doc-menu { width: 286px; background: #e0e0e0; border: 1px solid #a9a9a9; }
.doc-b2b { width: 287px; background: #cde3f7; border: 1px solid #0e66ad; padding-left: 2px; gap: 2px; }
.doc-x { width: 24px; height: 24px; margin-left: auto; margin-right: 7px; display: block; }

/* status */
.status { height: 36px; flex: none; position: relative; display: flex; align-items: center; gap: 11px; padding: 0 0 0 11px; border-top: 1px solid #4a7ab2; background: linear-gradient(#eff5fd, #dbe8f8 50%, #b3d1f5 55%, #c8dcf6); }
.status-art { position: absolute; left: -1px; top: 0; width: 1353px; height: 36px; display: block; }
.st-item { position: relative; color: #1d4a9e; white-space: nowrap; }
.st-msg { position: relative; color: #5e85c5; white-space: nowrap; margin-left: 4px; }
.grip { position: absolute; right: 8px; bottom: 4px; display: block; }
```
